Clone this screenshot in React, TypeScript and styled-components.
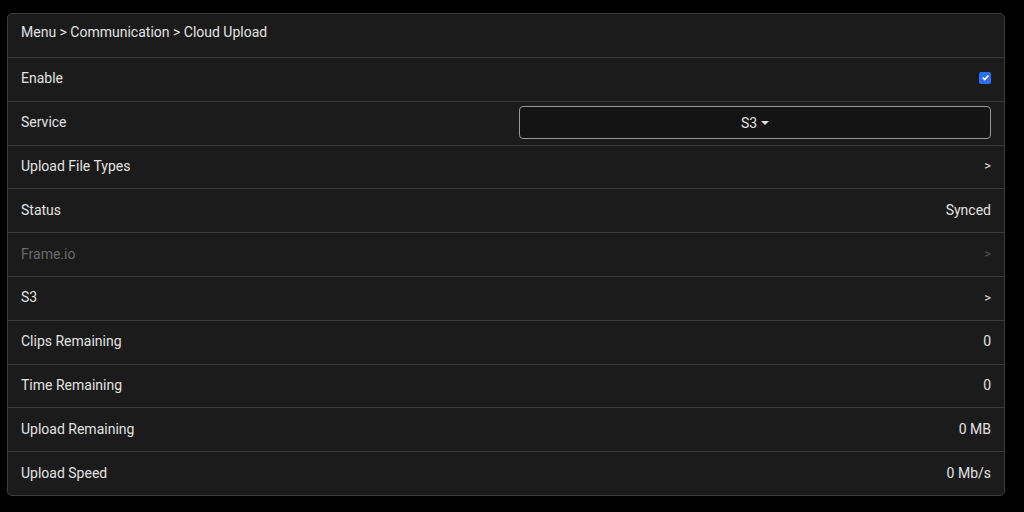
import { FC } from "react";
import styled, { createGlobalStyle } from "styled-components";

const GlobalStyle = createGlobalStyle`
  html, body {
    margin: 0;
    background: #000;
  }
  body {
    padding: 13px 19px 0 7px;
    font-family: Roboto, "Liberation Sans", sans-serif;
    font-size: 14px;
    color: #e2e2e2;
  }
`;

const Panel = styled.div`
  display: flex;
  flex-direction: column;
  background: #1b1b1b;
  border: 1px solid #3c3c3c;
  border-radius: 5px;
  overflow: hidden;
`;

const Row = styled.div<{ $disabled?: boolean }>`
  display: flex;
  align-items: center;
  justify-content: space-between;
  height: 42.8px;
  box-sizing: content-box;
  padding: 0 13px;
  border-top: 1px solid #3c3c3c;
  color: ${(p) => (p.$disabled ? "#6a6a6a" : "#e2e2e2")};
`;

const Header = styled.div`
  display: flex;
  align-items: center;
  height: 43px;
  box-sizing: border-box;
  padding: 0 13px 5px;
`;

const Label = styled.span`
  white-space: nowrap;
  margin-top: -2px;
`;

const Value = styled.span`
  white-space: nowrap;
  margin-top: -2px;
`;

const Chevron = styled.span<{ $disabled?: boolean }>`
  font-size: 13px;
  margin-top: -2px;
  color: ${(p) => (p.$disabled ? "#555" : "#e2e2e2")};
`;

const Check = styled.span`
  width: 12px;
  height: 12px;
  border-radius: 2px;
  background: #2a6ff2;
  display: flex;
  align-items: center;
  justify-content: center;
  margin-top: -3px;
`;

const Select = styled.div`
  width: 472px;
  height: 33px;
  box-sizing: border-box;
  border: 1px solid #9a9a9a;
  border-radius: 4px;
  background: #141414;
  display: flex;
  align-items: center;
  justify-content: center;
  gap: 4px;
  margin-top: -1px;
`;

const Caret = styled.span`
  width: 0;
  height: 0;
  border-left: 4px solid transparent;
  border-right: 4px solid transparent;
  border-top: 4px solid #e2e2e2;
  margin-top: 1px;
`;

type Item = { label: string; value?: string; link?: boolean; disabled?: boolean };

const items: Item[] = [
  { label: "Upload File Types", link: true },
  { label: "Status", value: "Synced" },
  { label: "Frame.io", link: true, disabled: true },
  { label: "S3", link: true },
  { label: "Clips Remaining", value: "0" },
  { label: "Time Remaining", value: "0" },
  { label: "Upload Remaining", value: "0 MB" },
  { label: "Upload Speed", value: "0 Mb/s" },
];

const App: FC = () => (
  <>
    <GlobalStyle />
    <Panel>
      <Header>
        <Label>Menu &gt; Communication &gt; Cloud Upload</Label>
      </Header>
      <Row>
        <Label>Enable</Label>
        <Check>
          <svg width="9" height="9" viewBox="0 0 10 10">
            <path d="M2 5.2 L4.2 7.3 L8.2 2.8" fill="none" stroke="#fff" strokeWidth="1.8" />
          </svg>
        </Check>
      </Row>
      <Row>
        <Label>Service</Label>
        <Select>
          <span>S3</span>
          <Caret />
        </Select>
      </Row>
      {items.map((it) => (
        <Row key={it.label} $disabled={it.disabled}>
          <Label>{it.label}</Label>
          {it.link ? (
            <Chevron $disabled={it.disabled}>&gt;</Chevron>
          ) : (
            <Value>{it.value}</Value>
          )}
        </Row>
      ))}
    </Panel>
  </>
);

export default App;
